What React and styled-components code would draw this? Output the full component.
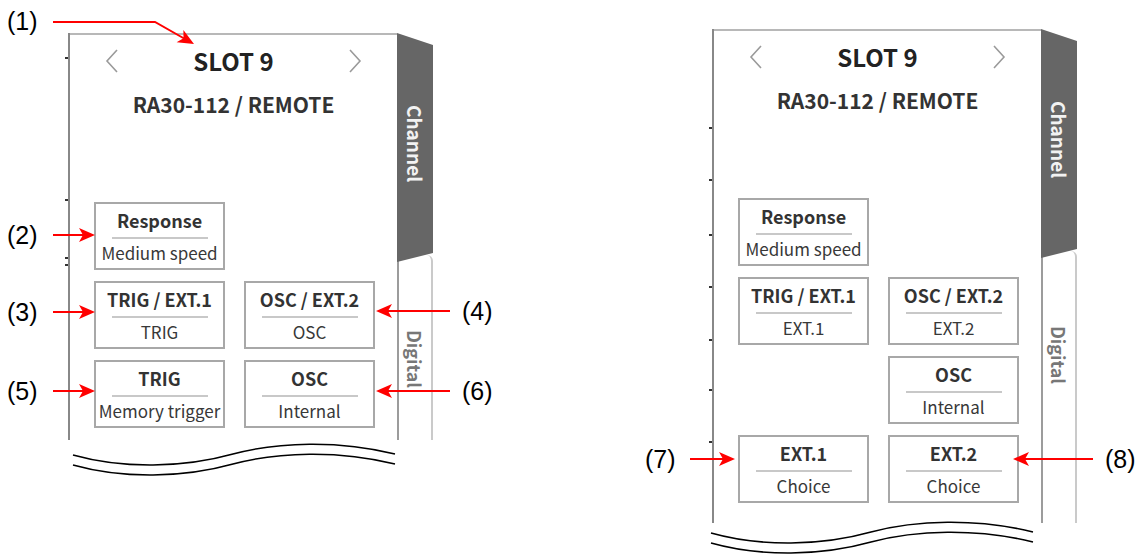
import React from 'react';
import styled, { createGlobalStyle } from 'styled-components';

const GlobalStyle = createGlobalStyle`
  html, body {
    margin: 0;
    padding: 0;
    background: #fff;
  }
  body {
    font-family: "Noto Sans CJK JP", "Noto Sans", sans-serif;
  }
`;

const Page = styled.div`
  display: flex;
  width: 1142px;
  height: 556px;
  overflow: hidden;
`;

const Figure = styled.div`
  position: relative;
  box-sizing: border-box;
  width: ${p => p.$width}px;
  padding: ${p => p.$top}px 0 0 ${p => p.$left}px;
`;

const Screen = styled.div`
  display: flex;
  height: ${p => p.$height}px;
`;

const RulerSvg = styled.svg`
  display: block;
  flex: none;
`;

const Panel = styled.div`
  box-sizing: border-box;
  width: 327px;
  border-top: 2px solid #b8b8b8;
  display: flex;
  flex-direction: column;
`;

const Header = styled.div`
  display: flex;
  align-items: center;
  justify-content: space-between;
  height: 30px;
  margin-top: 11px;
  padding: 0 35px;
`;

const Chevron = styled.svg`
  display: block;
`;

const SlotTitle = styled.div`
  font-size: 24px;
  font-weight: 700;
  line-height: 30px;
  color: #222;
`;

const Unit = styled.div`
  margin-top: 15px;
  text-align: center;
  font-size: 21px;
  font-weight: 700;
  line-height: 26px;
  color: #333;
`;

const Grid = styled.div`
  display: grid;
  grid-template-columns: 131px 131px;
  grid-auto-rows: 68px;
  column-gap: 19px;
  row-gap: 11px;
  margin-top: 85px;
  padding-left: 24px;
`;

const Box = styled.div`
  box-sizing: border-box;
  border: 2px solid #a8a8a8;
  display: flex;
  flex-direction: column;
  align-items: center;
  padding-top: 5px;
`;

const BoxTitle = styled.div`
  font-size: 18px;
  font-weight: 700;
  line-height: 22px;
  color: #333;
  white-space: nowrap;
`;

const Rule = styled.div`
  width: 96px;
  height: 2px;
  margin-top: 6px;
  background: #c8c8c8;
`;

const BoxValue = styled.div`
  margin-top: 3px;
  font-size: 17px;
  line-height: 22px;
  color: #383838;
  white-space: nowrap;
`;

const TabColumn = styled.div`
  width: 36px;
  display: flex;
  flex-direction: column;
`;

const ChannelTab = styled.div`
  position: relative;
  z-index: 1;
  box-sizing: border-box;
  height: 229px;
  padding-top: 72px;
  background: #666;
  clip-path: polygon(0 0, 100% 12px, 100% 220px, 0 100%);
  display: flex;
  align-items: center;
  justify-content: flex-start;
  writing-mode: vertical-rl;
  color: #f2f2f2;
  font-size: 19px;
  font-weight: 700;
`;

const DigitalTab = styled.div`
  flex: 1;
  margin-top: -7px;
  box-sizing: border-box;
  padding-top: 75px;
  border-left: 2px solid #9c9c9c;
  border-right: 2px solid #cacaca;
  border-top-right-radius: 6px;
  display: flex;
  align-items: center;
  justify-content: flex-start;
  writing-mode: vertical-rl;
  color: #777;
  font-size: 18px;
  font-weight: 700;
`;

const WaveSvg = styled.svg`
  display: block;
  margin-top: ${p => p.$top}px;
  margin-left: ${p => p.$left}px;
`;

const Callout = styled.div`
  position: absolute;
  left: ${p => p.$x}px;
  top: ${p => p.$y}px;
  display: flex;
  align-items: ${p => (p.$bent ? 'flex-start' : 'center')};
  gap: ${p => p.$gap}px;
  height: 26px;
`;

const Label = styled.span`
  display: block;
  width: 32px;
  font-family: "Liberation Sans", Arial, sans-serif;
  font-size: 25px;
  line-height: 26px;
  color: #000;
  white-space: nowrap;
`;

const ArrowSvg = styled.svg`
  display: block;
  flex: none;
`;

const RED = '#ff0000';
const HEAD = 'M0 0 L-16 -7 L-12 0 L-16 7 Z';

function Arrow({ length, dir }) {
  const c = 8;
  if (dir === 'right') {
    return (
      <ArrowSvg width={length} height="16">
        <line x1="0" y1={c} x2={length - 10} y2={c} stroke={RED} strokeWidth="2" />
        <path d={HEAD} fill={RED} transform={`translate(${length} ${c})`} />
      </ArrowSvg>
    );
  }
  return (
    <ArrowSvg width={length} height="16">
      <line x1="10" y1={c} x2={length} y2={c} stroke={RED} strokeWidth="2" />
      <path d={HEAD} fill={RED} transform={`translate(0 ${c}) rotate(180)`} />
    </ArrowSvg>
  );
}

function BentArrow() {
  return (
    <ArrowSvg width="150" height="44">
      <polyline points="0,14 102,14 132,31" fill="none" stroke={RED} strokeWidth="2" />
      <path d={HEAD} fill={RED} transform="translate(141 36) rotate(29)" />
    </ArrowSvg>
  );
}

function Ruler({ height, ticks }) {
  return (
    <RulerSvg width="6" height={height}>
      <rect x="4" y="0" width="2" height={height} fill="#888" />
      {ticks.map(t => (
        <rect key={t} x="1" y={t - 1} width="3" height="2" fill="#333" />
      ))}
    </RulerSvg>
  );
}

function Wave({ top, left }) {
  const d = 'M0 12 C50 26 110 25 160 11 C205 -1 265 -3 322 11';
  return (
    <WaveSvg $top={top} $left={left} width="324" height="36">
      <path d={d} fill="none" stroke="#000" strokeWidth="1.6" transform="translate(1 0)" />
      <path d={d} fill="none" stroke="#000" strokeWidth="1.6" transform="translate(1 10)" />
    </WaveSvg>
  );
}

function Left() {
  return (
    <Chevron width="14" height="24" viewBox="0 0 14 24">
      <polyline points="12,1 2,12 12,23" fill="none" stroke="#9a9a9a" strokeWidth="1.6" />
    </Chevron>
  );
}

function Right() {
  return (
    <Chevron width="14" height="24" viewBox="0 0 14 24">
      <polyline points="2,1 12,12 2,23" fill="none" stroke="#9a9a9a" strokeWidth="1.6" />
    </Chevron>
  );
}

function Slot({ height, ticks, cells, wave }) {
  return (
    <>
      <Screen $height={height}>
        <Ruler height={height} ticks={ticks} />
        <Panel>
          <Header>
            <Left />
            <SlotTitle>SLOT 9</SlotTitle>
            <Right />
          </Header>
          <Unit>RA30-112 / REMOTE</Unit>
          <Grid>
            {cells.map((c, i) =>
              c ? (
                <Box key={i}>
                  <BoxTitle>{c[0]}</BoxTitle>
                  <Rule />
                  <BoxValue>{c[1]}</BoxValue>
                </Box>
              ) : (
                <span key={i} />
              )
            )}
          </Grid>
        </Panel>
        <TabColumn>
          <ChannelTab>Channel</ChannelTab>
          <DigitalTab>Digital</DigitalTab>
        </TabColumn>
      </Screen>
      <Wave top={wave.top} left={wave.left} />
    </>
  );
}

const leftCells = [
  ['Response', 'Medium speed'],
  null,
  ['TRIG / EXT.1', 'TRIG'],
  ['OSC / EXT.2', 'OSC'],
  ['TRIG', 'Memory trigger'],
  ['OSC', 'Internal'],
];

const rightCells = [
  ['Response', 'Medium speed'],
  null,
  ['TRIG / EXT.1', 'EXT.1'],
  ['OSC / EXT.2', 'EXT.2'],
  null,
  ['OSC', 'Internal'],
  ['EXT.1', 'Choice'],
  ['EXT.2', 'Choice'],
];

export default function App() {
  return (
    <Page>
      <GlobalStyle />
      <Figure $width={600} $top={33} $left={64}>
        <Slot height={407} ticks={[25, 167, 225, 232]} cells={leftCells} wave={{ top: 3, left: 8 }} />

        <Callout $x={7} $y={8} $gap={14} $bent>
          <Label>(1)</Label>
          <BentArrow />
        </Callout>
        <Callout $x={7} $y={222} $gap={14}>
          <Label>(2)</Label>
          <Arrow dir="right" length={42} />
        </Callout>
        <Callout $x={7} $y={299} $gap={14}>
          <Label>(3)</Label>
          <Arrow dir="right" length={42} />
        </Callout>
        <Callout $x={7} $y={378} $gap={14}>
          <Label>(5)</Label>
          <Arrow dir="right" length={42} />
        </Callout>
        <Callout $x={376} $y={298} $gap={12}>
          <Arrow dir="left" length={74} />
          <Label>(4)</Label>
        </Callout>
        <Callout $x={376} $y={378} $gap={12}>
          <Arrow dir="left" length={74} />
          <Label>(6)</Label>
        </Callout>
      </Figure>

      <Figure $width={542} $top={29} $left={108}>
        <Slot
          height={494}
          ticks={[99, 151, 206, 258, 311, 361, 413]}
          cells={rightCells}
          wave={{ top: -2, left: 2 }}
        />

        <Callout $x={45} $y={446} $gap={13}>
          <Label>(7)</Label>
          <Arrow dir="right" length={45} />
        </Callout>
        <Callout $x={413} $y={446} $gap={12}>
          <Arrow dir="left" length={80} />
          <Label>(8)</Label>
        </Callout>
      </Figure>
    </Page>
  );
}
